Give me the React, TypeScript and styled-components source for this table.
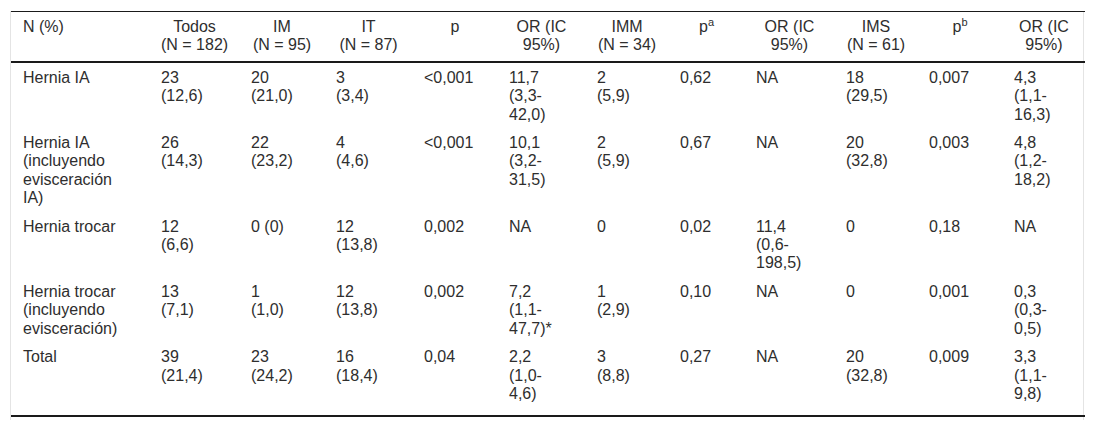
import React from "react";
import styled, { createGlobalStyle } from "styled-components";

const GlobalStyle = createGlobalStyle`
  html, body {
    margin: 0;
    padding: 0;
    background: #ffffff;
  }
`;

type Column = { label: React.ReactNode; width: number; align: "left" | "center" };

const columns: Column[] = [
  { label: "N (%)", width: 138, align: "left" },
  { label: "Todos\n(N = 182)", width: 90, align: "center" },
  { label: "IM\n(N = 95)", width: 85, align: "center" },
  { label: "IT\n(N = 87)", width: 88, align: "center" },
  { label: "p", width: 85, align: "center" },
  { label: "OR (IC\n95%)", width: 88, align: "center" },
  { label: "IMM\n(N = 34)", width: 83, align: "center" },
  { label: <>p<sup>a</sup></>, width: 76, align: "center" },
  { label: "OR (IC\n95%)", width: 90, align: "center" },
  { label: "IMS\n(N = 61)", width: 83, align: "center" },
  { label: <>p<sup>b</sup></>, width: 85, align: "center" },
  { label: "OR (IC\n95%)", width: 83, align: "center" },
];

const rows: string[][] = [
  ["Hernia IA", "23\n(12,6)", "20\n(21,0)", "3\n(3,4)", "<0,001", "11,7\n(3,3-\n42,0)", "2\n(5,9)", "0,62", "NA", "18\n(29,5)", "0,007", "4,3\n(1,1-\n16,3)"],
  ["Hernia IA\n(incluyendo\nevisceración\nIA)", "26\n(14,3)", "22\n(23,2)", "4\n(4,6)", "<0,001", "10,1\n(3,2-\n31,5)", "2\n(5,9)", "0,67", "NA", "20\n(32,8)", "0,003", "4,8\n(1,2-\n18,2)"],
  ["Hernia trocar", "12\n(6,6)", "0 (0)", "12\n(13,8)", "0,002", "NA", "0", "0,02", "11,4\n(0,6-\n198,5)", "0", "0,18", "NA"],
  ["Hernia trocar\n(incluyendo\nevisceración)", "13\n(7,1)", "1\n(1,0)", "12\n(13,8)", "0,002", "7,2\n(1,1-\n47,7)*", "1\n(2,9)", "0,10", "NA", "0", "0,001", "0,3\n(0,3-\n0,5)"],
  ["Total", "39\n(21,4)", "23\n(24,2)", "16\n(18,4)", "0,04", "2,2\n(1,0-\n4,6)", "3\n(8,8)", "0,27", "NA", "20\n(32,8)", "0,009", "3,3\n(1,1-\n9,8)"],
];

export default function App() {
  return (
    <>
      <GlobalStyle />
      <Page>
        <Frame>
          <Table>
            <colgroup>
              {columns.map((c, i) => (
                <col key={i} style={{ width: c.width }} />
              ))}
            </colgroup>
            <thead>
              <tr>
                {columns.map((c, i) => (
                  <HeadCell key={i} $align={c.align}>
                    {c.label}
                  </HeadCell>
                ))}
              </tr>
            </thead>
            <tbody>
              {rows.map((r, ri) => (
                <Row key={ri}>
                  {r.map((v, ci) => (
                    <Cell key={ci}>{v}</Cell>
                  ))}
                </Row>
              ))}
            </tbody>
          </Table>
        </Frame>
      </Page>
    </>
  );
}

const Page = styled.div`
  padding: 11px 10px 10px;
  font-family: "Liberation Sans", Arial, sans-serif;
  font-size: 16px;
  line-height: 18.4px;
  color: #2e2e2e;
`;

const Frame = styled.div`
  border-left: 1px solid #e4e4e4;
  border-right: 1px solid #e4e4e4;
  padding-bottom: 3px;
`;

const Table = styled.table`
  width: 100%;
  table-layout: fixed;
  border-collapse: collapse;
  border-top: 1px solid #1a1a1a;
  border-bottom: 2px solid #1a1a1a;
`;

const HeadCell = styled.th<{ $align: "left" | "center" }>`
  font-weight: normal;
  text-align: ${(p) => p.$align};
  vertical-align: top;
  white-space: pre;
  padding: 6px 11px 6px 12px;
  border-bottom: 2px solid #1a1a1a;

  sup {
    font-size: 11px;
    line-height: 0;
    vertical-align: 6px;
  }
`;

const Row = styled.tr`
  &:last-child td {
    padding-bottom: 12px;
  }
`;

const Cell = styled.td`
  text-align: left;
  vertical-align: top;
  white-space: pre;
  padding: 6px 8px 4px 12px;
`;
